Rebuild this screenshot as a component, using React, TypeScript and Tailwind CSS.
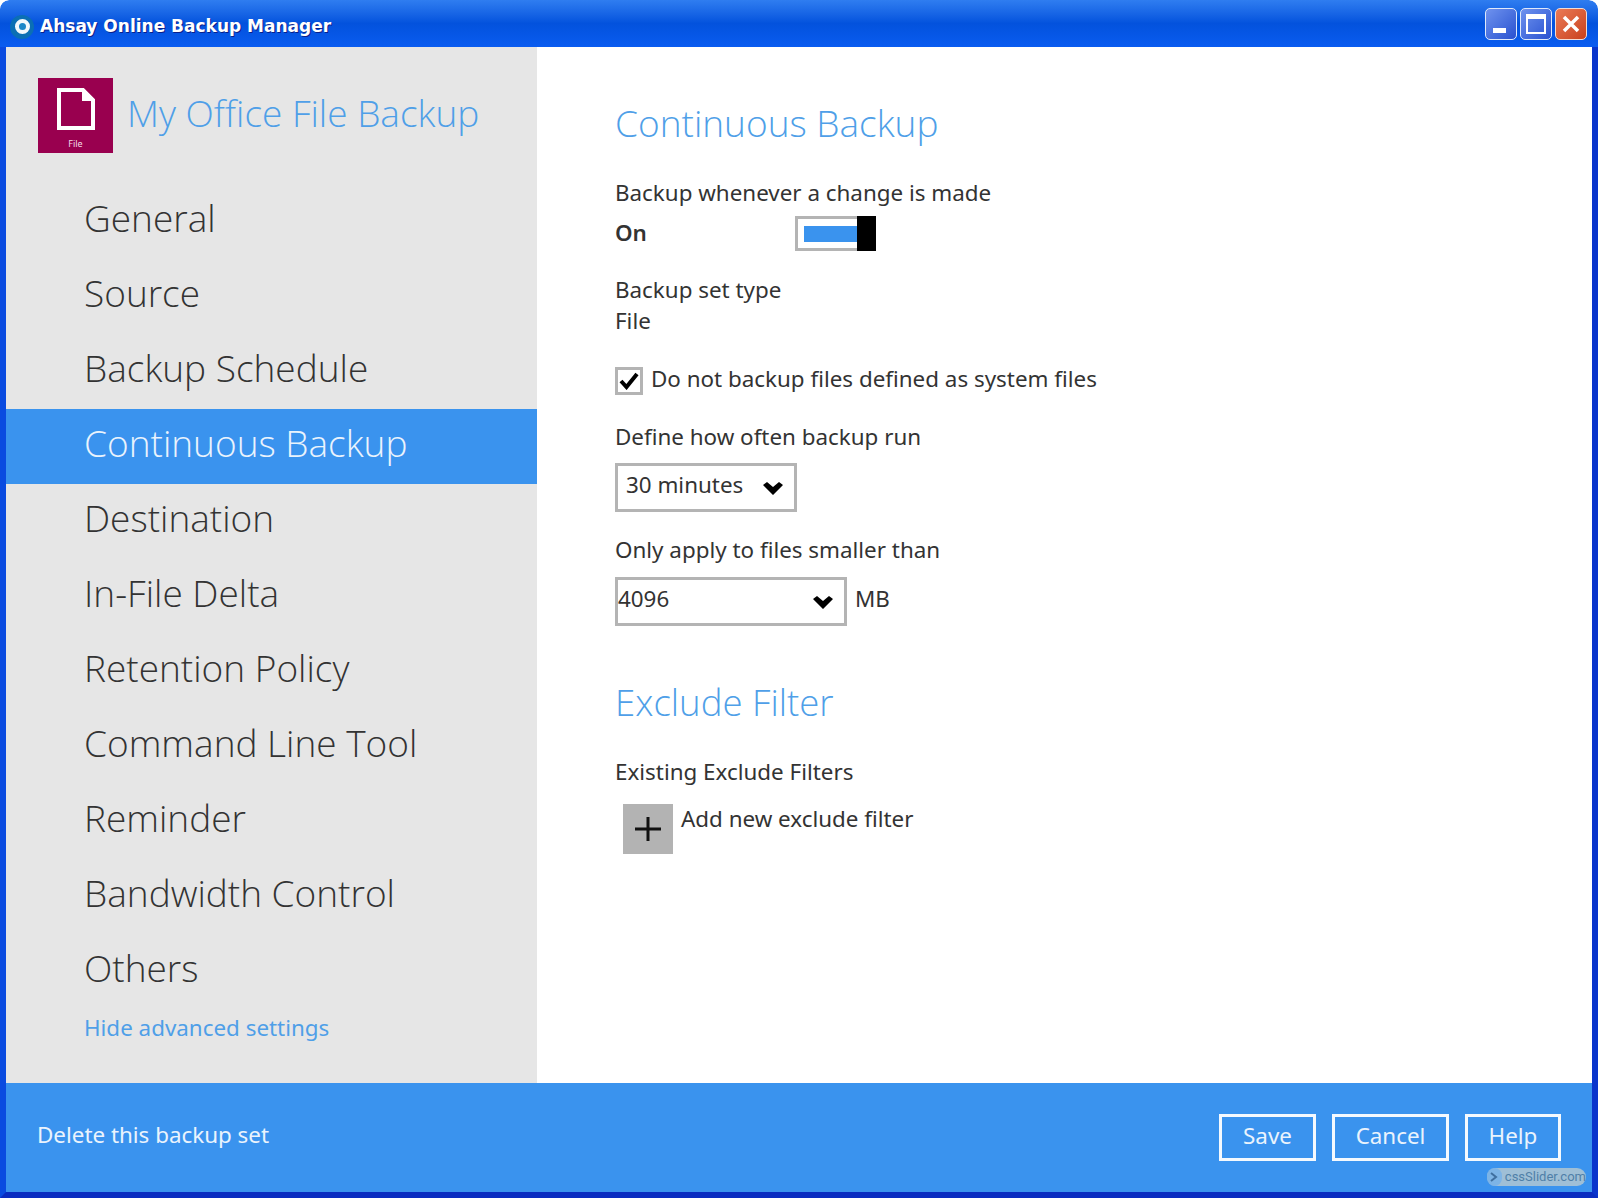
import React from 'react';

const navItems = [
  'General',
  'Source',
  'Backup Schedule',
  'Continuous Backup',
  'Destination',
  'In-File Delta',
  'Retention Policy',
  'Command Line Tool',
  'Reminder',
  'Bandwidth Control',
  'Others',
];

const Chevron = () => (
  <svg width="20" height="15" viewBox="0 0 20 15" className="mt-[2px] shrink-0">
    <path d="M0 4 L4 1 L10 6 L16 1 L20 4 L10 14 Z" fill="#000" />
  </svg>
);

const TitleBar = () => (
  <div className="flex h-[47px] shrink-0 items-center justify-between rounded-t-[9px] bg-gradient-to-b from-[#2f7df0] via-[#0352dd] to-[#0a5cf0] pl-[10px] pr-[11px] pt-[6px]">
    <div className="flex items-center gap-[6px]">
      <div className="flex h-[24px] w-[24px] items-center justify-center rounded-full bg-[#0b6fb4]">
        <div className="h-[15px] w-[15px] rounded-full border-[4px] border-[#f2f8fc] bg-[#1b86c8]" />
      </div>
      <span className="mt-[1px] font-['DejaVu_Sans',sans-serif] text-[17px] font-bold text-white [text-shadow:1px_1px_0_#0a1f8a]">
        Ahsay Online Backup Manager
      </span>
    </div>
    <div className="flex items-center gap-[3px] pb-[5px]">
      <div className="flex h-[32px] w-[32px] items-end rounded-[5px] border border-[#dfe9fb] bg-gradient-to-br from-[#6f92ee] to-[#2a50d0] pb-[6px] pl-[7px]">
        <div className="h-[5px] w-[13px] bg-white" />
      </div>
      <div className="flex h-[32px] w-[32px] items-center justify-center rounded-[5px] border border-[#dfe9fb] bg-gradient-to-br from-[#6f92ee] to-[#2a50d0]">
        <div className="h-[20px] w-[20px] border-[2px] border-t-[5px] border-white" />
      </div>
      <div className="flex h-[32px] w-[32px] items-center justify-center rounded-[5px] border border-[#f0dcd4] bg-gradient-to-br from-[#ea7a55] to-[#c9401a]">
        <svg width="20" height="20" viewBox="0 0 20 20">
          <path d="M3 3 L17 17 M17 3 L3 17" stroke="#fff" strokeWidth="3.5" />
        </svg>
      </div>
    </div>
  </div>
);

const Sidebar = () => (
  <aside className="flex w-[531px] shrink-0 flex-col bg-[#e6e6e6]">
    <div className="flex h-[137px] items-start pl-[32px] pt-[31px]">
      <div className="flex h-[75px] w-[75px] flex-col items-center bg-[#99004f] pt-[10px]">
        <svg width="38" height="42" viewBox="0 0 38 42">
          <path d="M2 2 H26 L36 12 V40 H2 Z" fill="none" stroke="#fff" strokeWidth="4" />
          <path d="M25 2 V13 H36 Z" fill="#fff" />
        </svg>
        <span className="mt-[8px] font-['Noto_Sans',sans-serif] text-[9px] leading-[11px] text-[#f3dbe6]">File</span>
      </div>
      <span className="ml-[14px] mt-[11px] font-['Open_Sans',sans-serif] text-[37px] font-light leading-[48px] text-[#4f9fe8]">
        My Office File Backup
      </span>
    </div>
    <nav className="flex flex-col">
      {navItems.map((item) => (
        <div
          key={item}
          className={
            item === 'Continuous Backup'
              ? "flex h-[75px] items-center bg-[#3a93ee] pb-[8px] pl-[78px] font-['Open_Sans',sans-serif] text-[37px] font-light text-[#eaf3fd]"
              : "flex h-[75px] items-center pb-[8px] pl-[78px] font-['Open_Sans',sans-serif] text-[37px] font-light text-[#333]"
          }
        >
          {item}
        </div>
      ))}
    </nav>
    <div className="mt-[3px] pl-[78px] font-['Noto_Sans',sans-serif] text-[22.4px] leading-[32px] text-[#4f9fe8]">
      Hide advanced settings
    </div>
  </aside>
);

const MainPanel = () => (
  <main className="flex-1 bg-white pl-[78px] font-['Noto_Sans',sans-serif] text-[22.4px] leading-[32px] text-[#333]">
    <h2 className="mt-[51px] font-['Open_Sans',sans-serif] text-[37px] font-light leading-[50px] text-[#4f9fe8]">
      Continuous Backup
    </h2>
    <div className="mt-[29px]">Backup whenever a change is made</div>
    <div className="mt-[7px] flex h-[35px] items-center">
      <span className="-mt-[2px] w-[180px] font-semibold">On</span>
      <div className="flex h-[35px] items-center">
        <div className="flex h-[35px] w-[65px] items-center border-[3px] border-[#b4b4b4] pl-[6px]">
          <div className="h-[16px] flex-1 bg-[#3a93ee]" />
        </div>
        <div className="h-[35px] w-[19px] -ml-[3px] bg-black" />
      </div>
    </div>
    <div className="mt-[23px]">Backup set type</div>
    <div className="-mt-[1px]">File</div>
    <div className="mt-[30px] flex h-[28px] items-center gap-[8px]">
      <div className="flex h-[28px] w-[28px] items-center justify-center border-[3px] border-[#b4b4b4]">
        <svg width="20" height="18" viewBox="0 0 20 18">
          <path d="M2 9 L7.5 15 L18 2" fill="none" stroke="#000" strokeWidth="4" />
        </svg>
      </div>
      <span className="-mt-[4px]">Do not backup files defined as system files</span>
    </div>
    <div className="mt-[26px]">Define how often backup run</div>
    <div className="mt-[10px] flex h-[49px] w-[182px] items-center justify-between border-[3px] border-[#b4b4b4] pl-[8px] pr-[11px]">
      <span className="-mt-[6px]">30 minutes</span>
      <Chevron />
    </div>
    <div className="mt-[22px]">Only apply to files smaller than</div>
    <div className="mt-[11px] flex items-center">
      <div className="flex h-[49px] w-[232px] items-center justify-between border-[3px] border-[#b4b4b4] pr-[11px]">
        <span className="-mt-[6px]">4096</span>
        <Chevron />
      </div>
      <span className="-mt-[6px] ml-[8px]">MB</span>
    </div>
    <h2 className="mt-[51px] font-['Open_Sans',sans-serif] text-[36.6px] font-light leading-[50px] text-[#4f9fe8]">
      Exclude Filter
    </h2>
    <div className="mt-[29px]">Existing Exclude Filters</div>
    <div className="ml-[8px] mt-[16px] flex items-start gap-[8px]">
      <div className="flex h-[50px] w-[50px] items-center justify-center bg-[#b3b3b3]">
        <svg width="28" height="28" viewBox="0 0 28 28">
          <path d="M14 2 V26 M1 14 H27" stroke="#111" strokeWidth="3" />
        </svg>
      </div>
      <span className="-mt-[1px]">Add new exclude filter</span>
    </div>
  </main>
);

const Footer = () => (
  <footer className="relative flex h-[109px] shrink-0 items-center justify-between bg-[#3a93ee] pl-[31px] pr-[31px] font-['Noto_Sans',sans-serif] text-[22.4px] text-[#eaf3fd]">
    <span className="-mt-[6px]">Delete this backup set</span>
    <div className="flex items-center gap-[16px]">
      <button className="h-[47px] w-[97px] border-[3px] border-[#f4f9fe] pb-[3px]">Save</button>
      <button className="h-[47px] w-[117px] border-[3px] border-[#f4f9fe] pb-[3px]">Cancel</button>
      <button className="h-[47px] w-[96px] border-[3px] border-[#f4f9fe] pb-[3px]">Help</button>
    </div>
    <div className="absolute bottom-[6px] right-[6px] flex h-[18px] w-[99px] items-center rounded-full bg-[#9fbfd6] font-['Roboto',sans-serif] text-[13px] text-[#4f7fa8]">
      <div className="flex h-[18px] w-[18px] items-center justify-center rounded-full bg-[#7db4e6]">
        <svg width="8" height="10" viewBox="0 0 8 10">
          <path d="M1 1 L6 5 L1 9" fill="none" stroke="#3f6f9f" strokeWidth="2" />
        </svg>
      </div>
      <span className="ml-[3px]">cssSlider.com</span>
    </div>
  </footer>
);

const App: React.FC = () => {
  return (
    <div className="flex h-[1198px] w-[1598px] flex-col overflow-hidden rounded-t-[9px] bg-white">
      <TitleBar />
      <div className="flex min-h-0 flex-1 flex-col border-b-[6px] border-l-[6px] border-r-[6px] border-b-[#0a2cc0] border-l-[#0a4be0] border-r-[#0a35cc]">
        <div className="flex min-h-0 flex-1">
          <Sidebar />
          <MainPanel />
        </div>
        <Footer />
      </div>
    </div>
  );
};

export default App;
